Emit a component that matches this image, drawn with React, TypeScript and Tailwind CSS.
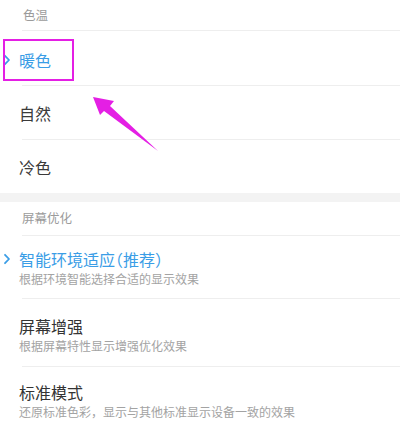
import React from "react";

const BLUE = "text-[#3a9de6]";

function Chevron() {
  return (
    <svg width="8" height="12" viewBox="0 0 8 12" className="absolute left-[3px] top-1/2 -translate-y-1/2">
      <path d="M2 1.8 L6 6 L2 10.2" fill="none" stroke="#3a9de6" strokeWidth="1.8" strokeLinecap="round" strokeLinejoin="round" />
    </svg>
  );
}

function Divider() {
  return <div className="ml-[22px] h-px bg-[#eeeeee]" />;
}

function SimpleRow({ label, active, h, pt }: { label: string; active?: boolean; h: string; pt: string }) {
  return (
    <div className={`flex items-center ${h} ${pt}`}>
      <div className="relative flex items-center pl-[19px]">
        {active && <Chevron />}
        <span className={`text-[16px] leading-[22px] ${active ? BLUE : "text-[#3a3a3a]"}`}>{label}</span>
      </div>
    </div>
  );
}

function DetailRow({ title, sub, active, h, pt }: { title: string; sub: string; active?: boolean; h: string; pt: string }) {
  return (
    <div className={`flex flex-col ${h} ${pt}`}>
      <div className="relative pl-[19px]">
        {active && <Chevron />}
        <span className={`block text-[16px] leading-[20px] [font-feature-settings:'halt'] ${active ? BLUE : "text-[#333333]"}`}>{title}</span>
      </div>
      <span className="mt-[1px] pl-[19px] text-[12px] leading-[18px] text-[#a3a3a3]">{sub}</span>
    </div>
  );
}

export default function App() {
  return (
    <div className="relative w-[400px] h-[423px] overflow-hidden bg-white font-['Noto_Sans_CJK_SC','Noto_Sans',sans-serif]">
      <div className="h-[30px] flex items-center pl-[23px] text-[12.5px] text-[#9b9b9b]">色温</div>
      <Divider />
      <SimpleRow label="暖色" active h="h-[54px]" pt="pt-[4px]" />
      <Divider />
      <SimpleRow label="自然" h="h-[53px]" pt="pt-[1px]" />
      <Divider />
      <SimpleRow label="冷色" h="h-[53px]" pt="pt-[1px]" />
      <div className="h-[9px] bg-[#f3f3f3]" />
      <div className="h-[33px] flex items-center pl-[22px] text-[12.5px] text-[#9b9b9b]">屏幕优化</div>
      <Divider />
      <DetailRow title="智能环境适应（推荐）" sub="根据环境智能选择合适的显示效果" active h="h-[62px]" pt="pt-[13px]" />
      <Divider />
      <DetailRow title="屏幕增强" sub="根据屏幕特性显示增强优化效果" h="h-[67px]" pt="pt-[17px]" />
      <Divider />
      <DetailRow title="标准模式" sub="还原标准色彩，显示与其他标准显示设备一致的效果" h="h-[67px]" pt="pt-[15px]" />

      <div className="absolute left-[3px] top-[39px] w-[71px] h-[42px] border-2 border-[#e41fe4]" />
      <svg className="absolute left-0 top-0" width="400" height="423" viewBox="0 0 400 423">
        <polygon points="93,97 114,101 110,106 158,151 104,111 100,115" fill="#e41fe4" />
      </svg>
    </div>
  );
}
